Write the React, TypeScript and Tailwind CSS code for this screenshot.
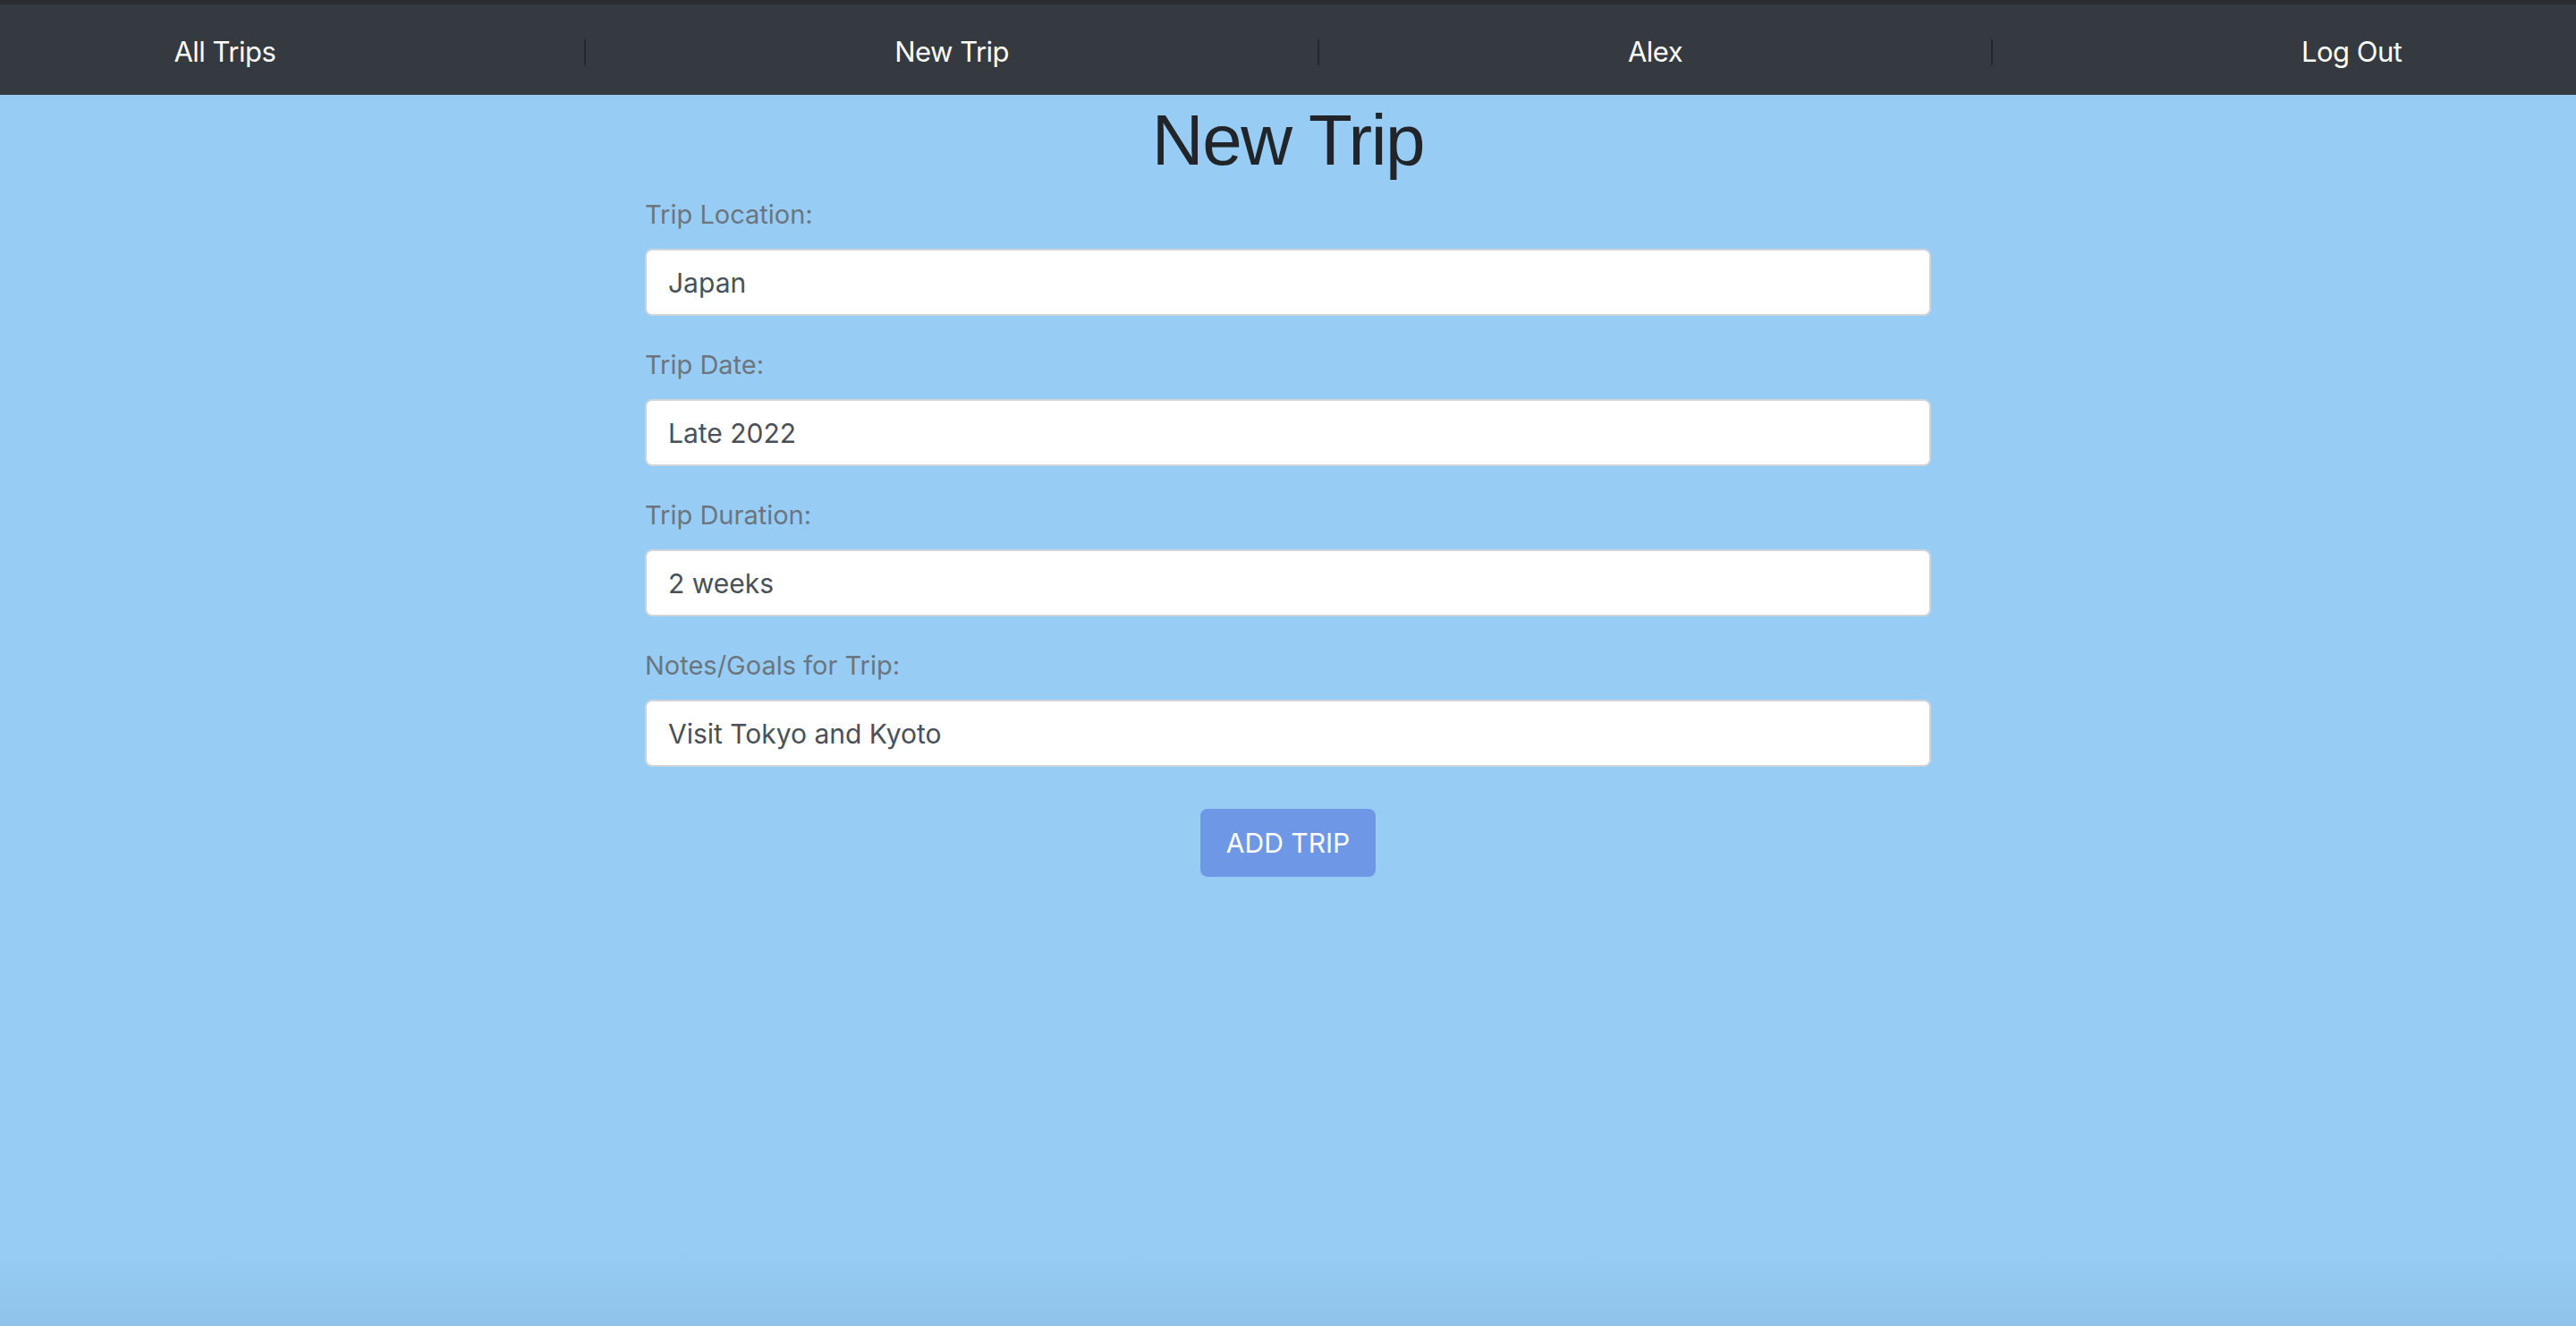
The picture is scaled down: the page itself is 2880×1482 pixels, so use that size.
import React, { useState } from 'react';

const fields = [
  { id: 'location', label: 'Trip Location:', value: 'Japan' },
  { id: 'date', label: 'Trip Date:', value: 'Late 2022' },
  { id: 'duration', label: 'Trip Duration:', value: '2 weeks' },
  { id: 'notes', label: 'Notes/Goals for Trip:', value: 'Visit Tokyo and Kyoto' },
];

const NavSep = () => <span className="w-[2px] h-[29px] bg-[#23272b]" />;

export default function App() {
  const [values, setValues] = useState<Record<string, string>>(
    Object.fromEntries(fields.map((f) => [f.id, f.value]))
  );

  return (
    <div className="min-h-screen flex flex-col bg-[#97cdf5] font-['Inter',sans-serif]">
      <nav className="h-[106px] border-t-[5px] border-[#2a2d30] bg-[#343a40] flex items-center justify-around px-[22px] pt-[6px] text-white text-[31px] tracking-[-0.5px]">
        <a href="#">All Trips</a>
        <NavSep />
        <a href="#">New Trip</a>
        <NavSep />
        <a href="#">Alex</a>
        <NavSep />
        <a href="#">Log Out</a>
      </nav>

      <main className="flex-1 flex flex-col items-center">
        <h1 className="mt-[3px] text-[80px] leading-[1.2] tracking-[-1.4px] text-[#212529] font-['Liberation_Sans',Arial,sans-serif]">
          New Trip
        </h1>

        <form className="w-[1438px] mt-[11px] flex flex-col" onSubmit={(e) => e.preventDefault()}>
          {fields.map((f) => (
            <div key={f.id} className="mb-[31px]">
              <label htmlFor={f.id} className="block text-[29px] leading-[48px] text-[#6c757d] mb-[14px]">
                {f.label}
              </label>
              <input
                id={f.id}
                type="text"
                value={values[f.id]}
                onChange={(e) => setValues({ ...values, [f.id]: e.target.value })}
                className="w-full h-[75px] bg-white border-2 border-[#ced4da] rounded-[8px] px-[24px] text-[30px] text-[#495057] outline-none"
              />
            </div>
          ))}
          <button
            type="submit"
            className="self-center mt-[16px] w-[196px] h-[76px] rounded-[8px] bg-[#6e97e6] text-white text-[30px]"
          >
            ADD TRIP
          </button>
        </form>
      </main>

      <div className="h-[90px] bg-gradient-to-b from-transparent to-black/5" />
    </div>
  );
}
